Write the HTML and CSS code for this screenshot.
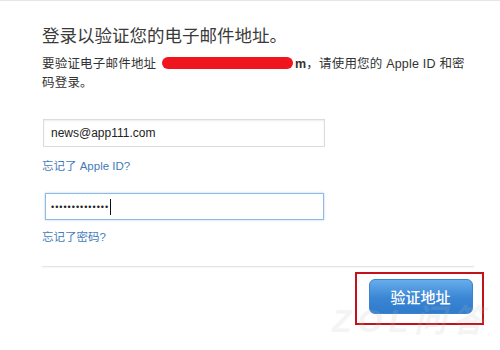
FILE: index.html
```html
<!DOCTYPE html>
<html lang="zh">
<head>
<meta charset="utf-8">
<link rel="stylesheet" href="styles.css">
</head>
<body>
<div class="page">
  <h1 class="title">登录以验证您的电子邮件地址。</h1>
  <p class="desc">要验证电子邮件地址 <span class="redact"></span><b class="tail">m</b>，请使用您的 Apple ID 和密码登录。</p>
  <div class="field field-email">news@app111.com</div>
  <a class="link link-id">忘记了 Apple ID?</a>
  <div class="field field-pass"><span class="dots">••••••••••••••</span><span class="caret"></span></div>
  <a class="link link-pw">忘记了密码?</a>
  <div class="divider"></div>
  <div class="actions">
    <div class="highlight">
      <button class="btn">验证地址</button>
    </div>
  </div>
  <div class="watermark">ZOL问答</div>
</div>
</body>
</html>
```
FILE: styles.css
```css
html, body {
  margin: 0;
  padding: 0;
  background: #fff;
}
body {
  width: 500px;
  height: 350px;
  overflow: hidden;
  font-family: "Liberation Sans", "Noto Sans CJK SC", sans-serif;
  color: #333;
  border-top: 1px solid #e6e6e6;
  box-sizing: border-box;
}
.page {
  position: relative;
  padding-left: 42px;
  height: 349px;
  overflow: hidden;
}
.title {
  margin: 0;
  padding-top: 25px;
  font-size: 17.5px;
  line-height: 20px;
  font-weight: normal;
  color: #3a3a3a;
}
.desc {
  margin: 9px 0 0 0;
  width: 432px;
  font-size: 12.5px;
  line-height: 18.5px;
  letter-spacing: 0.2px;
  color: #333;
}
.redact {
  display: inline-block;
  width: 131px;
  height: 12px;
  background: #f0141e;
  border-radius: 6px;
  vertical-align: -1px;
  margin-left: 2px;
  margin-right: 2px;
}
.tail {
  font-weight: bold;
}
.field {
  box-sizing: border-box;
  font-size: 12px;
  color: #222;
  display: flex;
  align-items: center;
  background: #fff;
}
.field-email {
  margin-top: 27px;
  margin-left: 1px;
  width: 282px;
  height: 28px;
  border: 1px solid #dcdcdc;
  box-shadow: inset 0 1px 2px rgba(0,0,0,0.08);
  padding-left: 7px;
}
.link {
  display: block;
  font-size: 11.5px;
  line-height: 14px;
  color: #3f7cb8;
  text-decoration: none;
}
.link-id {
  margin-top: 12px;
}
.field-pass {
  margin-top: 20px;
  margin-left: 3px;
  width: 279px;
  height: 27px;
  border: 1px solid #8cbce6;
  box-shadow: 0 0 2px rgba(100,160,220,0.5);
  padding-left: 5px;
}
.dots {
  font-size: 9px;
  letter-spacing: 1px;
  color: #222;
}
.caret {
  display: inline-block;
  width: 1px;
  height: 16px;
  background: #111;
  margin-left: 1px;
}
.link-pw {
  margin-top: 10px;
}
.divider {
  margin-top: 22px;
  width: 432px;
  height: 1px;
  background: #e4e4e4;
  box-shadow: 0 1px 1px rgba(0,0,0,0.04);
}
.actions {
  display: flex;
  justify-content: flex-end;
  width: 442px;
  margin-top: 5px;
}
.highlight {
  box-sizing: border-box;
  width: 129px;
  height: 53px;
  border: 2px solid #c3121c;
  display: flex;
  justify-content: center;
  align-items: flex-start;
  padding-top: 5px;
  padding-left: 2px;
}
.btn {
  width: 104px;
  height: 35px;
  border: 1px solid #3d82cc;
  border-radius: 6px;
  background: linear-gradient(#66adec, #3a86d4 55%, #2f7bcc);
  color: #fff;
  font-family: "Noto Sans CJK SC", sans-serif;
  font-size: 15px;
  padding: 0;
  font-weight: 500;
}
.watermark {
  position: absolute;
  left: 332px;
  top: 300px;
  font-family: "Liberation Sans", "Noto Sans CJK SC", sans-serif;
  font-size: 32px;
  line-height: 40px;
  font-weight: bold;
  font-style: italic;
  color: rgba(190,190,190,0.18);
  letter-spacing: 6px;
  pointer-events: none;
}
```
